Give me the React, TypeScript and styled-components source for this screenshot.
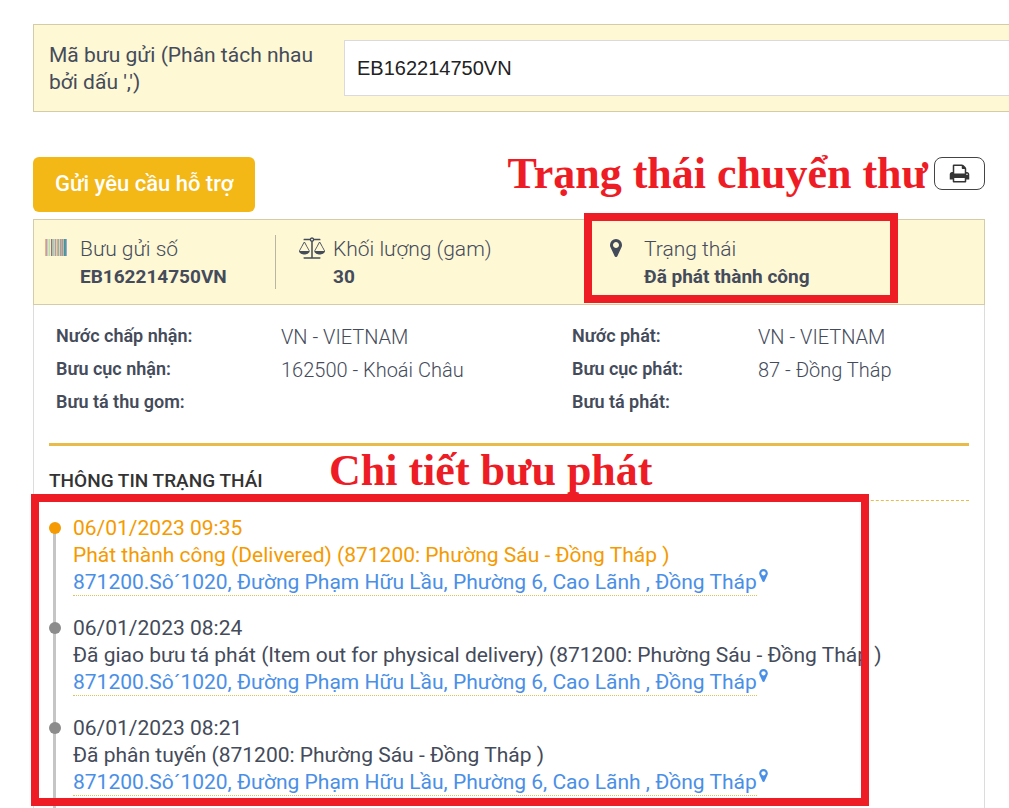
import React from "react";
import styled, { createGlobalStyle } from "styled-components";

const GlobalStyle = createGlobalStyle`
  * { box-sizing: border-box; }
  body {
    margin: 0;
    background: #fff;
    color: #444b5a;
    font: 400 21px/27px Roboto, "Open Sans", sans-serif;
  }
`;

const Page = styled.main`
  height: 100vh;
  overflow: hidden;
  padding: 24px 0 0 33px;
`;

const SearchBar = styled.form`
  display: flex;
  align-items: center;
  padding: 15px 0 15px 15px;
  border: 1px solid #d3cca6;
  border-right: 0;
  background: #fef8d5;
`;

const SearchLabel = styled.label`
  flex: 0 0 295px;
  padding: 2px 20px 0 0;
`;

const SearchInput = styled.input`
  flex: 1;
  min-width: 0;
  height: 56px;
  padding: 0 12px;
  border: 1px solid #d9d9de;
  border-right: 0;
  border-radius: 0;
  background: #fff;
  color: #222;
  font: 20px "Liberation Sans", Arial, sans-serif;
  outline: 0;
`;

const Result = styled.div`
  margin: 45px 24px 0 0;
`;

const Actions = styled.div`
  display: flex;
  align-items: flex-start;
  justify-content: space-between;
  margin-bottom: 7px;
`;

const SupportButton = styled.button`
  height: 55px;
  padding: 0 22px 2px;
  border: 0;
  border-radius: 6px;
  background: #f3b716;
  color: #fff;
  font: 500 22px/27px Roboto, sans-serif;
`;

const PrintArea = styled.div`
  position: relative;
`;

const PrintButton = styled.button`
  display: flex;
  align-items: center;
  justify-content: center;
  width: 51px;
  height: 33px;
  padding: 0;
  border: 1px solid #444;
  border-radius: 8px;
  background: #fff;
  color: #333;
`;

const Note = styled.strong`
  position: absolute;
  color: #ee1c24;
  font: 700 44px/50px "Liberation Serif", "Times New Roman", serif;
  white-space: nowrap;
`;

const PrintNote = styled(Note)`
  right: 57px;
  top: -8px;
`;

const DetailNote = styled(Note)`
  left: 280px;
  top: 0;
`;

const Frame = styled.div`
  position: absolute;
  border: 8px solid #ee1c24;
  pointer-events: none;
`;

const StatusFrame = styled(Frame)`
  left: -25px;
  top: -22px;
  width: 314px;
  height: 90px;
`;

const TimelineFrame = styled(Frame)`
  left: -18px;
  right: 100px;
  top: -7px;
  height: 312px;
`;

const Card = styled.section`
  border: 1px solid #dcdcde;
  border-top: 0;
`;

const Summary = styled.header`
  display: grid;
  grid-template-columns: 242fr 333fr 375fr;
  margin: 0 -1px;
  padding: 15px 0;
  border: 1px solid #d3cca6;
  background: #fef8d5;
`;

const SummaryItem = styled.div<{ $inset: number; $divided?: boolean }>`
  position: relative;
  display: flex;
  height: 54px;
  padding-left: ${(p) => p.$inset}px;
  border-right: ${(p) => (p.$divided ? "1px solid #b9b5a3" : "0")};
`;

const SummaryIcon = styled.span<{ $width: number }>`
  display: flex;
  align-items: center;
  width: ${(p) => p.$width}px;
  height: 25px;
`;

const SummaryText = styled.div`
  padding-top: 1px;
  font-weight: 300;
`;

const SummaryValue = styled.strong`
  display: block;
  font-size: 19px;
  font-weight: 700;
`;

const Body = styled.div`
  padding: 15px;
`;

const Details = styled.dl`
  display: grid;
  grid-template-columns: 225fr 291fr 186fr 211fr;
  grid-auto-rows: 33px;
  margin: 0;
  padding: 0 0 24px 7px;
  white-space: nowrap;
`;

const Term = styled.dt<{ $column: number }>`
  grid-column: ${(p) => p.$column};
  font-size: 18px;
  font-weight: 600;
  line-height: 31px;
`;

const Value = styled.dd`
  margin: 0;
  font-size: 20px;
  font-weight: 300;
  line-height: 35px;
`;

const HistoryHead = styled.div`
  position: relative;
  height: 58px;
  border-top: 3px solid #e8bb4b;
  border-bottom: 1px dashed #e8bb4b;
`;

const HistoryTitle = styled.h2`
  margin: 0;
  padding-top: 21px;
  color: #333;
  font-size: 19px;
  font-weight: 500;
  line-height: 27px;
`;

const HistoryWrap = styled.div`
  position: relative;
`;

const Timeline = styled.ol`
  margin: 0;
  padding: 14px 0 0;
  list-style: none;
`;

const Event = styled.li<{ $active?: boolean }>`
  position: relative;
  height: 100px;
  padding-left: 24px;
  color: ${(p) => (p.$active ? "#f59a00" : "#444b5a")};
  white-space: nowrap;

  &::before {
    content: "";
    position: absolute;
    left: 4px;
    top: 13px;
    width: 3px;
    height: 100px;
    background: #c5c5c5;
  }

  &::after {
    content: "";
    position: absolute;
    left: 0;
    top: 7px;
    width: 12px;
    height: 12px;
    border-radius: 50%;
    background: ${(p) => (p.$active ? "#f59a00" : "#8c8c8c")};
    z-index: 1;
  }
`;

const AddressRow = styled.div`
  display: flex;
  gap: 2px;
`;

const Address = styled.a`
  height: 27px;
  border-bottom: 1px dotted #e3bf55;
  color: #4a8fe7;
  text-decoration: none;
`;

const PinMark = styled.span`
  display: flex;
  height: 13px;
  color: #4a8fe7;
`;

const MapPin = ({ width, height }: { width: number; height: number }) => (
  <svg width={width} height={height} viewBox="0 128 1024 1536" fill="currentColor" aria-hidden="true">
    <path d="M768 640q0-106-75-181t-181-75-181 75-75 181 75 181 181 75 181-75 75-181zm256 0q0 109-33 179l-364 774q-16 33-47.5 52t-67.5 19-67.5-19-46.5-52l-365-774q-33-70-33-179 0-212 150-362t362-150 362 150 150 362z" />
  </svg>
);

const Printer = () => (
  <svg width="21" height="21" viewBox="0 0 1792 1792" fill="currentColor" aria-hidden="true">
    <path d="M448 1536h896v-256h-896v256zm0-640h896v-384h-160q-40 0-68-28t-28-68v-160h-640v640zm1152 64q0-26-19-45t-45-19-45 19-19 45 19 45 45 19 45-19 19-45zm128 0v416q0 13-9.5 22.5t-22.5 9.5h-224v160q0 40-28 68t-68 28h-960q-40 0-68-28t-28-68v-160h-224q-13 0-22.5-9.5t-9.5-22.5v-416q0-79 56.5-135.5t135.5-56.5h64v-544q0-40 28-68t68-28h672q40 0 88 20t76 48l152 152q28 28 48 76t20 88v256h64q79 0 135.5 56.5t56.5 135.5z" />
  </svg>
);

const Scales = () => (
  <svg width="26" height="22" viewBox="0 0 2176 1792" fill="currentColor" aria-hidden="true">
    <path d="M1728 448l-384 704h768zm-1280 0l-384 704h768zm821-192q-14 40-45.5 71.5t-71.5 45.5v1291h608q14 0 23 9t9 23v64q0 14-9 23t-23 9h-1344q-14 0-23-9t-9-23v-64q0-14 9-23t23-9h608v-1291q-40-14-71.5-45.5t-45.5-71.5h-491q-14 0-23-9t-9-23v-64q0-14 9-23t23-9h491q21-57 70-92.5t111-35.5 111 35.5 70 92.5h491q14 0 23 9t9 23v64q0 14-9 23t-23 9h-491zm-181 16q33 0 56.5-23.5t23.5-56.5-23.5-56.5-56.5-23.5-56.5 23.5-23.5 56.5 23.5 56.5 56.5 23.5zm1088 880q0 73-46.5 131t-117.5 91-144.5 49.5-139.5 16.5-139.5-16.5-144.5-49.5-117.5-91-46.5-131q0-11 35-81t92-174.5 107-195.5 102-184 56-100q18-33 56-33t56 33q4 7 56 100t102 184 107 195.5 92 174.5 35 81zm-1280 0q0 73-46.5 131t-117.5 91-144.5 49.5-139.5 16.5-139.5-16.5-144.5-49.5-117.5-91-46.5-131q0-11 35-81t92-174.5 107-195.5 102-184 56-100q18-33 56-33t56 33q4 7 56 100t102 184 107 195.5 92 174.5 35 81z" />
  </svg>
);

const barColors = [
  "#e8b48a", "#b4a0b8", "#e3c3b0", "#d5e6c0", "#b9e0a0", "#eef0b8", "#94708c", "#c9b8a0",
  "#a0cfc0", "#f0c898", "#8fa8c8", "#cfd8b8", "#e0a890", "#88b4b8", "#e8d0a0", "#a898b8",
  "#c8b088", "#80a8c0", "#e0b080", "#409898", "#5c94a8", "#98a8cc",
];

const Barcode = () => (
  <svg width="22" height="17" viewBox="0 0 22 17" shapeRendering="crispEdges" aria-hidden="true">
    {barColors.map((color, i) => (
      <rect key={i} x={i} y="0" width="1" height="17" fill={color} />
    ))}
  </svg>
);

const address = "871200.Sô´1020, Đường Phạm Hữu Lầu, Phường 6, Cao Lãnh , Đồng Tháp";

const events = [
  { time: "06/01/2023 09:35", text: "Phát thành công (Delivered) (871200: Phường Sáu - Đồng Tháp )" },
  { time: "06/01/2023 08:24", text: "Đã giao bưu tá phát (Item out for physical delivery) (871200: Phường Sáu - Đồng Tháp )" },
  { time: "06/01/2023 08:21", text: "Đã phân tuyến (871200: Phường Sáu - Đồng Tháp )" },
];

export default function App() {
  return (
    <>
      <GlobalStyle />
      <Page>
        <SearchBar>
          <SearchLabel htmlFor="code">Mã bưu gửi (Phân tách nhau bởi dấu ',')</SearchLabel>
          <SearchInput id="code" defaultValue="EB162214750VN" />
        </SearchBar>
        <Result>
          <Actions>
            <SupportButton type="button">Gửi yêu cầu hỗ trợ</SupportButton>
            <PrintArea>
              <PrintNote>Trạng thái chuyển thư</PrintNote>
              <PrintButton type="button" aria-label="In">
                <Printer />
              </PrintButton>
            </PrintArea>
          </Actions>
          <Card>
            <Summary>
              <SummaryItem $inset={11} $divided>
                <SummaryIcon $width={35}><Barcode /></SummaryIcon>
                <SummaryText>Bưu gửi số<SummaryValue>EB162214750VN</SummaryValue></SummaryText>
              </SummaryItem>
              <SummaryItem $inset={23}>
                <SummaryIcon $width={34}><Scales /></SummaryIcon>
                <SummaryText>Khối lượng (gam)<SummaryValue>30</SummaryValue></SummaryText>
              </SummaryItem>
              <SummaryItem $inset={1}>
                <SummaryIcon $width={34}><MapPin width={12} height={18} /></SummaryIcon>
                <SummaryText>Trạng thái<SummaryValue>Đã phát thành công</SummaryValue></SummaryText>
                <StatusFrame />
              </SummaryItem>
            </Summary>
            <Body>
              <Details>
                <Term $column={1}>Nước chấp nhận:</Term>
                <Value>VN - VIETNAM</Value>
                <Term $column={3}>Nước phát:</Term>
                <Value>VN - VIETNAM</Value>
                <Term $column={1}>Bưu cục nhận:</Term>
                <Value>162500 - Khoái Châu</Value>
                <Term $column={3}>Bưu cục phát:</Term>
                <Value>87 - Đồng Tháp</Value>
                <Term $column={1}>Bưu tá thu gom:</Term>
                <Value />
                <Term $column={3}>Bưu tá phát:</Term>
                <Value />
              </Details>
              <HistoryHead>
                <HistoryTitle>THÔNG TIN TRẠNG THÁI</HistoryTitle>
                <DetailNote>Chi tiết bưu phát</DetailNote>
              </HistoryHead>
              <HistoryWrap>
                <Timeline>
                  {events.map((e, i) => (
                    <Event key={e.time} $active={i === 0}>
                      <div>{e.time}</div>
                      <div>{e.text}</div>
                      <AddressRow>
                        <Address href="#">{address}</Address>
                        <PinMark><MapPin width={9} height={13} /></PinMark>
                      </AddressRow>
                    </Event>
                  ))}
                </Timeline>
                <TimelineFrame />
              </HistoryWrap>
            </Body>
          </Card>
        </Result>
      </Page>
    </>
  );
}
